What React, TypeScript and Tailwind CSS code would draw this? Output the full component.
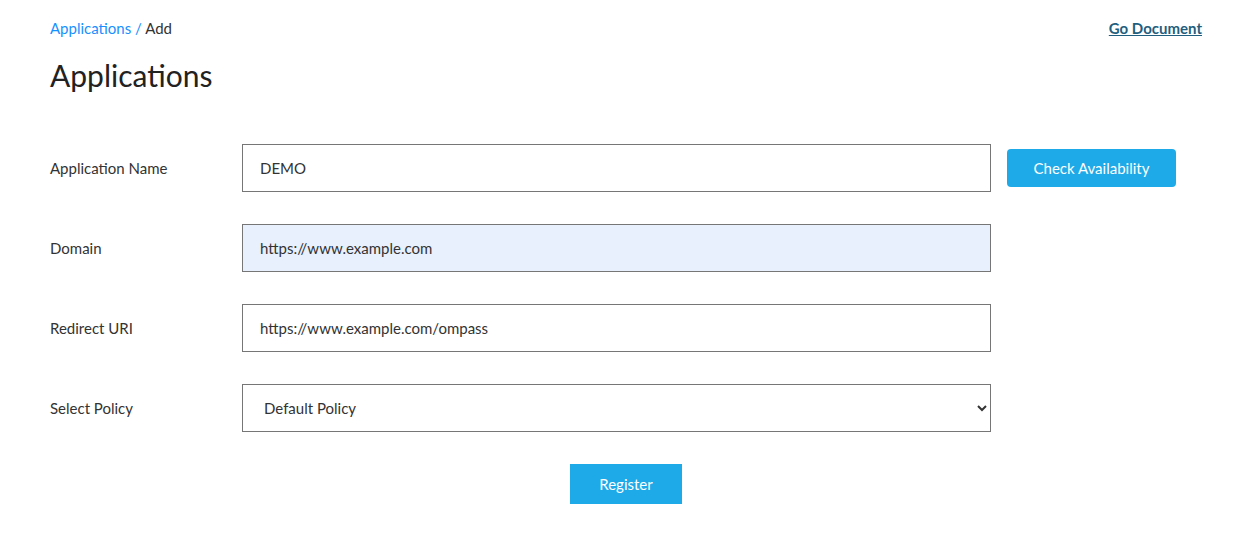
export default function App() {
  const rows = [
    { label: "Application Name", value: "DEMO", check: true },
    { label: "Domain", value: "https://www.example.com", autofill: true },
    { label: "Redirect URI", value: "https://www.example.com/ompass" },
  ];

  return (
    <div className="min-h-[544px] w-full bg-white pl-[50px] pr-[31px] pt-[17px] font-['Lato',sans-serif] text-[#333]">
      {/* Top bar */}
      <div className="flex items-start justify-between">
        <div className="text-[15px] leading-[22px]">
          <span className="text-[#1890ff]">Applications / </span>
          <span className="text-[#333]">Add</span>
        </div>
        <a href="#" className="text-[15px] font-bold leading-[22px] text-[#1f5e7e] underline">
          Go Document
        </a>
      </div>

      <h1 className="mt-[18px] text-[30px] leading-[36px] text-[#222]">Applications</h1>

      {/* Form */}
      <div className="mt-[51px] flex flex-col gap-[32px]">
        {rows.map((row) => (
          <div key={row.label} className="flex items-center">
            <label className="w-[192px] text-[15px] text-[#333]">{row.label}</label>
            <input
              defaultValue={row.value}
              className={`h-[48px] w-[749px] border border-[#767676] px-[17px] text-[15px] text-[#333] outline-none ${
                row.autofill ? "bg-[#e8f0fe]" : "bg-white"
              }`}
            />
            {row.check && (
              <button className="ml-[16px] h-[38px] w-[169px] rounded-[4px] bg-[#1ea9e8] text-[15px] text-white">
                Check Availability
              </button>
            )}
          </div>
        ))}

        <div className="flex items-center">
          <label className="w-[192px] text-[15px] text-[#333]">Select Policy</label>
          <select
            defaultValue="default"
            className="h-[48px] w-[749px] border border-[#767676] bg-white pl-[17px] pr-[4px] text-[15px] text-[#333] outline-none"
          >
            <option value="default">Default Policy</option>
          </select>
        </div>
      </div>

      <div className="mt-[32px] flex justify-center">
        <button className="h-[40px] w-[112px] bg-[#1ea9e8] text-[15px] text-white">Register</button>
      </div>
    </div>
  );
}
